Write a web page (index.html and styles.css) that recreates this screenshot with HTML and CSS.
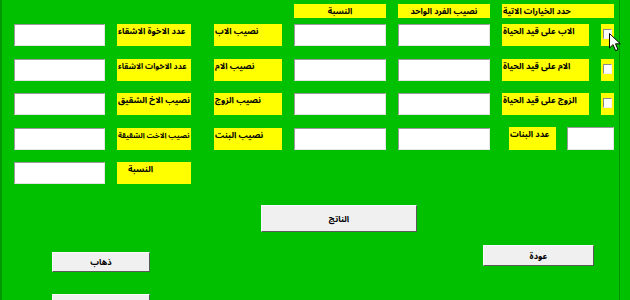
FILE: index.html
```html
<!DOCTYPE html>
<html lang="ar">
<head>
<meta charset="utf-8">
<title>حساب المواريث</title>
<link rel="stylesheet" href="styles.css">
</head>
<body>
<div class="form">
  <div class="head">
    <div class="hcell c4">النسبة</div>
    <div class="hcell c5">نصيب الفرد الواحد</div>
    <div class="hcell c6 left">حدد الخيارات الاتية</div>
  </div>
  <div class="grid">
    <input class="txt" type="text">
    <div class="lbl">عدد الاخوة الاشقاء</div>
    <div class="lbl c3">نصيب الاب</div>
    <input class="txt" type="text">
    <input class="txt" type="text">
    <div class="lbl">الاب على قيد الحياة</div>
    <div class="chk"><span class="box"></span></div>

    <input class="txt" type="text">
    <div class="lbl tight">عدد الاخوات الاشقاء</div>
    <div class="lbl c3">نصيب الام</div>
    <input class="txt" type="text">
    <input class="txt" type="text">
    <div class="lbl">الام على قيد الحياة</div>
    <div class="chk"><span class="box"></span></div>

    <input class="txt" type="text">
    <div class="lbl">نصيب الاخ الشقيق</div>
    <div class="lbl c3">نصيب الزوج</div>
    <input class="txt" type="text">
    <input class="txt" type="text">
    <div class="lbl">الزوج على قيد الحياة</div>
    <div class="chk"><span class="box"></span></div>

    <input class="txt" type="text">
    <div class="lbl tighter">نصيب الاخت الشقيقة</div>
    <div class="lbl c3">نصيب البنت</div>
    <input class="txt" type="text">
    <input class="txt" type="text">
    <div class="daughters">
      <div class="lbl small">عدد البنات</div>
      <input class="txt small-in" type="text">
    </div>

    <input class="txt" type="text">
    <div class="lbl pad">النسبة</div>
  </div>
  <div class="result-row">
    <button class="btn result">الناتج</button>
  </div>
  <div class="lower">
    <div class="left-btns">
      <button class="btn go">ذهاب</button>
      <button class="btn go"></button>
    </div>
    <button class="btn back">عودة</button>
  </div>
  <svg class="cursor" width="13" height="19" viewBox="0 0 13 19">
    <path d="M0.5 0.5 L0.5 15 L4 11.6 L6.6 17.6 L9 16.6 L6.5 10.8 L11.3 10.8 Z" fill="#fff" stroke="#000" stroke-width="1" stroke-linejoin="miter"/>
  </svg>
</div>
</body>
</html>
```

FILE: styles.css
```css
html, body {
  margin: 0;
  padding: 0;
  background: #00c000;
}
body {
  width: 630px;
  height: 300px;
  overflow: hidden;
  font-family: "Noto Sans Arabic UI", "Noto Sans Arabic", "Noto Naskh Arabic", "DejaVu Sans", sans-serif;
}
.form {
  position: relative;
  box-sizing: border-box;
  width: 620px;
  height: 300px;
  padding-left: 12px;
  padding-top: 4px;
  border-left: 2px solid #009a00;
  border-right: 1px solid #009400;
}
.head, .grid {
  display: grid;
  grid-template-columns: 91px 74px 79px 92px 92px 87px 13px;
  column-gap: 12px;
}
.head {
  grid-template-rows: 14px;
  margin-bottom: 6px;
}
.hcell {
  background: #ffff00;
  font-weight: bold;
  font-size: 8.4px;
  line-height: 14px;
  text-align: center;
  white-space: nowrap;
}
.hcell.c4 { grid-column: 4; }
.hcell.c5 { grid-column: 5; }
.hcell.c6 { grid-column: 6 / span 2; }
.hcell.left { text-align: left; padding-left: 1px; }
.grid {
  grid-auto-rows: 22px;
  row-gap: 12.6px;
}
.txt {
  margin: 0;
  padding: 0;
  width: 100%;
  height: 100%;
  box-sizing: border-box;
  background: #fff;
  border: 1px solid;
  border-color: #9a9a9a #e4e4e4 #e4e4e4 #9a9a9a;
  outline: none;
}
.lbl {
  background: #ffff00;
  font-weight: bold;
  font-size: 8.6px;
  line-height: 12px;
  padding: 1px 0 0 1px;
  text-align: left;
  white-space: nowrap;
  color: #000;
}
.lbl.tight { font-size: 7.9px; }
.lbl.tighter { font-size: 7.4px; }
.lbl.c3 {
  width: 67px;
  justify-self: end;
}
.lbl.pad { padding-left: 11px; }
.chk {
  background: #ffff00;
  padding: 5px 0 0 2px;
  box-sizing: border-box;
}
.box {
  display: block;
  width: 9px;
  height: 10px;
  background: #fff;
  border: 1px solid;
  border-color: #8a8a8a #f0f0f0 #f0f0f0 #8a8a8a;
  box-sizing: border-box;
}
.daughters {
  grid-column: 6 / span 2;
  display: flex;
  padding-left: 7px;
  gap: 11px;
  margin-top: -1px;
  height: 23px;
}
.lbl.small { width: 48px; }
.txt.small-in { width: 47px; flex: none; }
.btn {
  display: block;
  margin: 0;
  padding: 0;
  background: #f0f0f0;
  border: 1px solid;
  border-color: #fafafa #5a5a5a #5a5a5a #fafafa;
  box-sizing: border-box;
  font-family: inherit;
  font-weight: bold;
  font-size: 8.6px;
  color: #000;
  text-align: center;
}
.result-row {
  padding-left: 247px;
  margin-top: 21px;
}
.result {
  width: 156px;
  height: 27px;
}
.lower {
  display: flex;
  align-items: flex-start;
  padding-left: 38px;
}
.left-btns {
  display: flex;
  flex-direction: column;
  gap: 22px;
  margin-top: 20px;
}
.go {
  width: 98px;
  height: 20px;
}
.back {
  width: 111px;
  height: 21px;
  margin-left: 333px;
  margin-top: 13px;
}
.cursor {
  position: absolute;
  left: 607px;
  top: 33px;
}
```
